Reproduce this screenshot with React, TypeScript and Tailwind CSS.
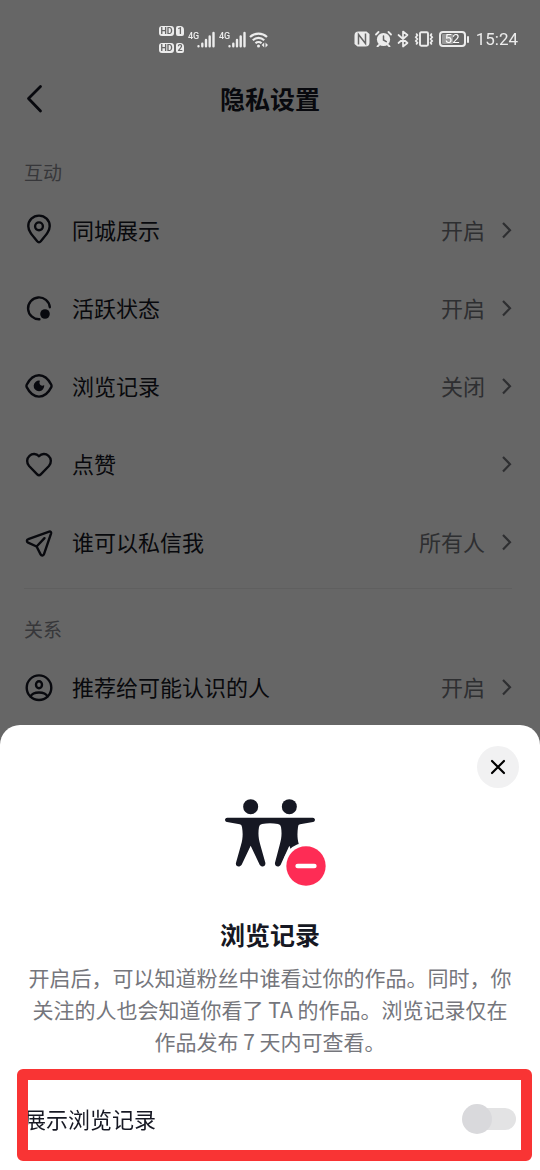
import { useState, type ReactNode } from 'react';

type Item = {
  label: string;
  value?: string;
  icon: ReactNode;
};

const interactionItems: Item[] = [
  {
    label: '同城展示',
    value: '开启',
    icon: (
      <>
        <path d="M15 -.4C9 -.4 4.300 4.200 4.300 10.200c0 4.600 3.200 8.400 8.900 15 1.100 1.300 2.500 1.300 3.600 0 5.700-6.600 8.900-10.400 8.900-15C25.700 4.200 21-.4 15-.4Z" />
        <circle cx="15" cy="10.300" r="3.900" />
      </>
    ),
  },
  {
    label: '活跃状态',
    value: '开启',
    icon: (
      <>
        <path d="M25.800 13.200A10.900 10.900 0 1 0 15.400 25.200" />
        <circle cx="21" cy="20" r="4.800" fill="currentColor" stroke="none" />
      </>
    ),
  },
  {
    label: '浏览记录',
    value: '关闭',
    icon: (
      <>
        <path d="M2.700 12.700C6 6.200 10 3.200 15 3.200s9 3 12.300 9.500c.4.8.4 1.600 0 2.400C24 21.600 20 24.600 15 24.600s-9-3-12.300-9.500c-.4-.8-.4-1.600 0-2.400Z" />
        <path
          d="M16 8.700A5.300 5.300 0 1 0 20.200 13.100C18.900 13.900 17.400 13.800 16.400 12.900C15.300 11.900 15.200 10.200 16 8.700Z"
          fill="currentColor"
          stroke="none"
        />
      </>
    ),
  },
  {
    label: '点赞',
    icon: (
      <path d="M15 6.300C12.400 3.500 8.300 3.300 5.500 5.800 2.500 8.500 2.400 13 5.100 16l8.100 8.300c1.100 1.100 2.500 1.100 3.600 0L24.900 16c2.700-3 2.600-7.500-.4-10.200C21.700 3.300 17.600 3.500 15 6.300Z" />
    ),
  },
  {
    label: '谁可以私信我',
    value: '所有人',
    icon: (
      <>
        <path d="M4.300 11.200 25.200 3.600c1.300-.5 2.200.4 1.900 1.700L20 26.100c-.6 1.700-2.600 1.800-3.400.3L12.600 18.500 4.100 14.600c-1.700-.8-1.600-2.800.2-3.400Z" />
        <path d="M12.600 18.500 20.500 10.200" />
      </>
    ),
  },
];

const relationItems: Item[] = [
  {
    label: '推荐给可能认识的人',
    value: '开启',
    icon: (
      <>
        <circle cx="15" cy="14.700" r="12.300" />
        <ellipse cx="15" cy="11.800" rx="3" ry="3.500" />
        <path d="M6.500 23.500C8 20.400 11 19.500 15 19.500s7 .9 8.500 4" />
      </>
    ),
  },
];

function SettingRow({ label, value, icon }: Item) {
  return (
    <button className="flex h-[78px] w-full items-center text-left text-[22px] leading-8 text-[#161823]">
      <svg
        viewBox="0 0 30 30"
        className="mr-[18px] h-[30px] w-[30px] shrink-0 overflow-visible"
        fill="none"
        stroke="currentColor"
        strokeWidth="2.4"
        strokeLinecap="round"
        strokeLinejoin="round"
      >
        {icon}
      </svg>
      <span className="flex-1 pb-1">{label}</span>
      {value && <span className="pb-1 text-[#74757b]">{value}</span>}
      <svg viewBox="0 0 12 20" className="ml-[15px] h-5 w-3" fill="none" stroke="#74757b" strokeWidth="2.200">
        <path d="M3 2l7 7.200-7 7.200" />
      </svg>
    </button>
  );
}

function SectionTitle({ children }: { children: ReactNode }) {
  return <h2 className="h-[38px] text-[19px] leading-9 text-[#8a8b91]">{children}</h2>;
}

function SimBadge({ slot }: { slot: number }) {
  return (
    <div className="flex gap-[2px] font-['Roboto','Noto_Sans',sans-serif] text-[9px] leading-[10px] font-bold text-[#666]">
      <span className="w-[15px] rounded-[3px] bg-[#ececec] text-center">HD</span>
      <span className="w-[8px] rounded-[2px] rounded-tr-[4px] bg-[#ececec] text-center">{slot}</span>
    </div>
  );
}

function Signal() {
  return (
    <div className="flex">
      <span className="w-[9px] font-['Roboto','Noto_Sans',sans-serif] text-[9px] leading-[10px] font-medium">4G</span>
      <svg viewBox="0 0 18 17" className="h-[17px] w-[18px]" fill="none" stroke="currentColor" strokeWidth="2.400" strokeLinecap="round">
        <path d="M1.500 15.300v-.1M5.300 15.300v-2.500M9 15.300V9M12.700 15.300V5.500M16.500 15.300V2" />
      </svg>
    </div>
  );
}

function StatusBar() {
  return (
    <div className="relative z-20 flex h-[78px] items-center justify-between pr-[22px] pl-[159px] text-[#ececec]">
      <div className="flex items-center">
        <div className="mr-1 flex flex-col gap-[7px]">
          <SimBadge slot={1} />
          <SimBadge slot={2} />
        </div>
        <div className="flex gap-[4px]">
          <Signal />
          <Signal />
        </div>
        <svg viewBox="0 0 20 17" className="ml-[3px] h-[17px] w-5" fill="none" stroke="currentColor" strokeWidth="2.200">
          <path d="M1 6a12.500 12.500 0 0 1 17 0M3.800 9.200a8.400 8.400 0 0 1 11.400 0M6.500 12.200a4.400 4.400 0 0 1 6 0" />
          <circle cx="9.500" cy="15" r="1.500" fill="currentColor" stroke="none" />
          <path d="M15.200 11.500v5l-2.500-2.500ZM16.500 11.500v5l2.500-2.500Z" fill="currentColor" stroke="none" />
        </svg>
      </div>
      <div className="flex items-center">
        <svg viewBox="0 0 16 16" className="mr-[5px] h-4 w-4">
          <path d="M4.500.5H12.500L15.500 3V11.500a4 4 0 0 1-4 4H3.500L.5 13V4.500a4 4 0 0 1 4-4Z" fill="currentColor" />
          <path d="M4.500 13.500V3.500L11.500 12.500V2.500" fill="none" stroke="#666" strokeWidth="1.500" />
        </svg>
        <svg viewBox="0 0 17 16" className="mr-[5px] h-4 w-[17px]" fill="none" strokeLinecap="round">
          <circle cx="8.500" cy="8.500" r="6.600" fill="currentColor" />
          <path d="M1 3.500 3.500 1M16 3.500 13.500 1M4 14l-1.500 1.500M13 14l1.500 1.500" stroke="currentColor" strokeWidth="1.800" />
          <path d="M8.500 5v4l2.800 1.700" stroke="#666" strokeWidth="1.500" />
        </svg>
        <svg viewBox="0 0 12 18" className="mr-[5px] h-[18px] w-3" fill="none" stroke="currentColor" strokeWidth="1.700" strokeLinecap="round" strokeLinejoin="round">
          <path d="M1.500 5 10.500 13 6 16.500V1.500L10.500 5 1.500 13" />
        </svg>
        <svg viewBox="0 0 20 16" className="mr-[5px] h-4 w-5" fill="none" stroke="currentColor" strokeWidth="1.900">
          <rect x="6" y="1.200" width="8" height="13.600" rx="1.200" />
          <path d="M2.200 2.500 3.400 4.300 1.800 6.200 3.400 8 1.800 9.900 3.400 11.700 2.200 13.500M17.800 2.500 16.600 4.300 18.200 6.200 16.600 8 18.200 9.900 16.600 11.700 17.800 13.500" strokeWidth="1.700" />
        </svg>
        <div className="relative h-4 w-[27px] rounded-[4px] border-2 border-current">
          <div className="absolute inset-y-px left-px w-[11px] rounded-[1px] bg-[#9a9a9a]" />
          <span className="relative block text-center font-['Roboto','Noto_Sans',sans-serif] text-[13px] leading-3 text-white">52</span>
        </div>
        <div className="mr-[7px] ml-px h-[7px] w-[2px] rounded-sm bg-current" />
        <time className="font-['Roboto','Noto_Sans',sans-serif] text-[17px] leading-6">15:24</time>
      </div>
    </div>
  );
}

function PeopleIllustration() {
  return (
    <svg viewBox="0 30 360 285" className="h-[95px] w-[120px]" fill="#161823">
      <circle cx="122" cy="65" r="22.500" />
      <circle cx="238" cy="65" r="22.500" />
      <path d="M52 98H308C317 98 317 110 309 111L270 118Q264 119 264 126C262 142 261 158 266 176L282 238 262 245 238 182 212 239C207 248 193 245 195 233L209 180C215 160 216 144 213 126Q212 118 204 117Q180 113 156 117Q148 118 147 126C144 144 145 160 151 180L166 233C168 245 155 248 149 239L122 182 95 239C89 248 75 245 78 233L93 180C99 160 99 144 96 126Q95 119 89 118L51 111C43 110 43 98 52 98Z" />
      <circle cx="288" cy="243" r="70" fill="#fff" />
      <circle cx="288" cy="243" r="59" fill="#fe2c55" />
      <rect x="256" y="236" width="64" height="14" rx="7" fill="#fff" />
    </svg>
  );
}

export default function App() {
  const [showHistory, setShowHistory] = useState(false);

  return (
    <div className="relative min-h-screen bg-white font-['Noto_Sans_CJK_SC',sans-serif]">
      <StatusBar />

      <header className="grid h-10 grid-cols-[48px_1fr_48px] items-center px-[18px] text-[#161823]">
        <button aria-label="返回" className="flex h-10 items-center pl-[7px]">
          <svg viewBox="0 0 18 30" className="h-[30px] w-[18px]" fill="none" stroke="currentColor" strokeWidth="2.800" strokeLinecap="round" strokeLinejoin="round">
            <path d="M15.500 2.500 3.500 14.500 15.500 27" />
          </svg>
        </button>
        <h1 className="pb-[2px] text-center text-[25px] leading-10 font-bold">隐私设置</h1>
      </header>

      <main className="pt-9 pr-7 pl-6">
        <section>
          <SectionTitle>互动</SectionTitle>
          {interactionItems.map((item) => (
            <SettingRow key={item.label} {...item} />
          ))}
        </section>
        <section className="mt-[6px] border-t border-[#ededee] pt-[22px]">
          <SectionTitle>关系</SectionTitle>
          {relationItems.map((item) => (
            <SettingRow key={item.label} {...item} />
          ))}
        </section>
      </main>

      {/* Mask */}
      <div className="fixed inset-0 z-10 bg-black/60" />

      {/* Bottom sheet */}
      <div role="dialog" aria-labelledby="sheet-title" className="fixed inset-x-0 bottom-0 z-30 rounded-t-[20px] bg-white text-[#161823]">
        <button
          aria-label="关闭"
          className="absolute top-[21px] right-[21px] flex h-[42px] w-[42px] items-center justify-center rounded-full bg-[#f1f1f2]"
        >
          <svg viewBox="0 0 16 16" className="h-4 w-4" fill="none" stroke="#000" strokeWidth="2.200" strokeLinecap="round">
            <path d="M2 2l12 12M14 2 2 14" />
          </svg>
        </button>

        <div className="flex flex-col items-center px-6 pt-[70px]">
          <PeopleIllustration />
          <h2 id="sheet-title" className="mt-6 text-[25px] leading-10 font-bold">浏览记录</h2>
          <p className="mt-[7px] text-center text-[21px] leading-8 text-[#75767c]">
            开启后，可以知道粉丝中谁看过你的作品。同时，你关注的人也会知道你看了 TA 的作品。浏览记录仅在作品发布 7 天内可查看。
          </p>
        </div>

        <div className="relative mt-3 mb-[9px] flex h-[92px] items-center justify-between pt-2 pr-6 pl-6">
          <label htmlFor="show-history" className="pb-[2px] text-[22px] leading-8">展示浏览记录</label>
          <input
            id="show-history"
            type="checkbox"
            role="switch"
            checked={showHistory}
            onChange={(e) => setShowHistory(e.target.checked)}
            className="relative h-[30px] w-[54px] appearance-none before:absolute before:top-[4px] before:right-0 before:h-[22px] before:w-[48px] before:rounded-full before:bg-[#e3e3e4] after:absolute after:top-0 after:left-0 after:h-[30px] after:w-[30px] after:rounded-full after:bg-[#d9d9dc] checked:before:bg-[#fe2c55] checked:after:left-6"
          />
          {/* Highlight frame */}
          <div className="pointer-events-none absolute inset-y-0 right-2 left-[17px] rounded-md border-[11px] border-[#f93434]" />
        </div>
      </div>
    </div>
  );
}
